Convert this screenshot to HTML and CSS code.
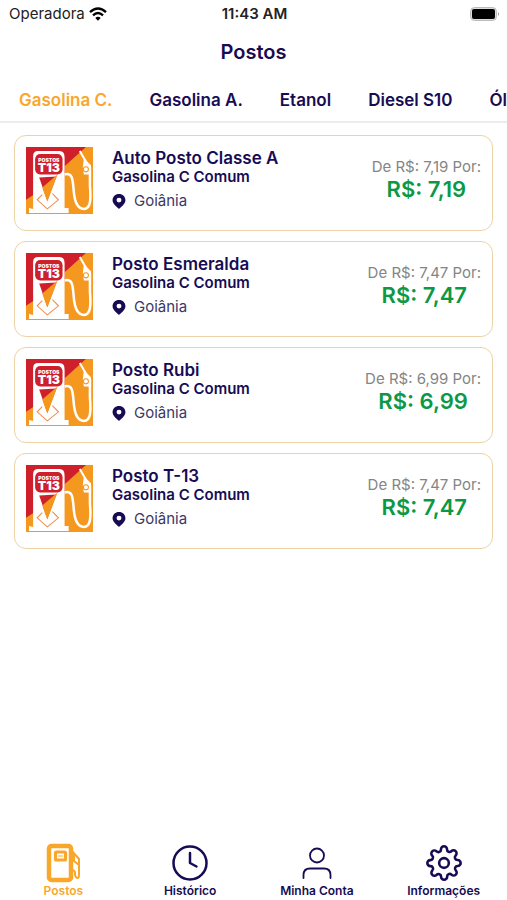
FILE: index.html
```html
<!DOCTYPE html>
<html lang="pt-BR">
<head>
    <meta charset="UTF-8">
    <meta name="viewport" content="width=device-width, initial-scale=1.0">
    <title>Postos</title>
    <link rel="stylesheet" href="styles.css">
</head>
<body>
    <!-- Shared drawings -->
    <svg class="symbols" aria-hidden="true">
        <symbol id="station-logo" viewBox="0 0 66 66">
            <rect width="66" height="66" fill="#f5981f"/>
            <path d="M0 0H59L38 19V27L0 52Z" fill="#cf1f2b"/>
            <path d="M7 61V9Q7 4 12 4H33Q38 4 38 10V60H42V65H3V60Z" fill="#fff"/>
            <path d="M38 27C46 25 46 32 47 43C48 56 52 61 57 61C64 61 64 51 63 38V20" fill="none" stroke="#fff" stroke-width="2.500"/>
            <path d="M53 4L60 16" fill="none" stroke="#fff" stroke-width="2"/>
            <path d="M57 11L64 18V27H57L56 20Z" fill="#fff"/>
            <circle cx="59" cy="22" r="2.500" fill="none" stroke="#f5961d" stroke-width="1"/>
            <rect x="9" y="7" width="27" height="20" rx="5" fill="#cf1f2b"/>
            <path d="M13 30L30 29L21 53Z" fill="#cf1f2b"/>
            <path d="M31 27L16 40L21 54Z" fill="#f5961d"/>
            <path d="M16 47L11 52L21 61L32 52L26 46" fill="none" stroke="#ef8a4a" stroke-width="1"/>
            <text x="22.500" y="14.500" class="logo-small">POSTOS</text>
            <text x="22.500" y="25" class="logo-large">T13</text>
        </symbol>
        <symbol id="pin" viewBox="0 0 12 14">
            <path fill-rule="evenodd" d="M6 0C2.500 0 0 2.500 0 5.800C0 9.500 4.500 12.500 6 14C7.500 12.500 12 9.500 12 5.800C12 2.500 9.500 0 6 0ZM6 3.400A2.300 2.300 0 1 1 6 8A2.300 2.300 0 1 1 6 3.400Z" fill="currentColor"/>
        </symbol>
    </svg>

    <!-- Status Bar -->
    <div class="status-bar">
        <div class="carrier">
            <span>Operadora</span>
            <svg width="18" height="14" viewBox="0 0 18 14" fill="none" stroke="#000" stroke-width="2.400" aria-hidden="true">
                <path d="M1 5.200Q9 -2.400 17 5.200"/>
                <path d="M4 8.400Q9 3.800 14 8.400"/>
                <path d="M6.300 11Q9 8.400 11.700 11L9 13.800Z" fill="#000" stroke="none"/>
            </svg>
        </div>
        <span class="clock">11:43 AM</span>
        <svg class="battery" width="30" height="14" viewBox="0 0 30 14" aria-hidden="true">
            <rect x="0.500" y="0.500" width="26" height="13" rx="4" fill="#ddd" stroke="#bbb"/>
            <rect x="2" y="2" width="23" height="10" rx="2" fill="#000"/>
            <path d="M28 5Q30 7 28 9Z" fill="#999"/>
        </svg>
    </div>

    <header class="title-bar">
        <h1>Postos</h1>
    </header>

    <!-- Fuel Tabs -->
    <nav class="fuel-tabs">
        <button type="button" class="active">Gasolina C.</button>
        <button type="button">Gasolina A.</button>
        <button type="button">Etanol</button>
        <button type="button">Diesel S10</button>
        <button type="button">Óleo Diesel</button>
    </nav>

    <!-- Station List -->
    <main class="stations">
        <article class="card">
            <svg class="logo" role="img" aria-label="Postos T13"><use href="#station-logo"/></svg>
            <div class="info">
                <h2>Auto Posto Classe A</h2>
                <p class="fuel">Gasolina C Comum</p>
                <p class="city"><svg class="pin" aria-hidden="true"><use href="#pin"/></svg>Goiânia</p>
            </div>
            <div class="price">
                <p class="old-price">De R$: 7,19 Por:</p>
                <p class="new-price">R$: 7,19</p>
            </div>
        </article>
        <article class="card">
            <svg class="logo" role="img" aria-label="Postos T13"><use href="#station-logo"/></svg>
            <div class="info">
                <h2>Posto Esmeralda</h2>
                <p class="fuel">Gasolina C Comum</p>
                <p class="city"><svg class="pin" aria-hidden="true"><use href="#pin"/></svg>Goiânia</p>
            </div>
            <div class="price">
                <p class="old-price">De R$: 7,47 Por:</p>
                <p class="new-price">R$: 7,47</p>
            </div>
        </article>
        <article class="card">
            <svg class="logo" role="img" aria-label="Postos T13"><use href="#station-logo"/></svg>
            <div class="info">
                <h2>Posto Rubi</h2>
                <p class="fuel">Gasolina C Comum</p>
                <p class="city"><svg class="pin" aria-hidden="true"><use href="#pin"/></svg>Goiânia</p>
            </div>
            <div class="price">
                <p class="old-price">De R$: 6,99 Por:</p>
                <p class="new-price">R$: 6,99</p>
            </div>
        </article>
        <article class="card">
            <svg class="logo" role="img" aria-label="Postos T13"><use href="#station-logo"/></svg>
            <div class="info">
                <h2>Posto T-13</h2>
                <p class="fuel">Gasolina C Comum</p>
                <p class="city"><svg class="pin" aria-hidden="true"><use href="#pin"/></svg>Goiânia</p>
            </div>
            <div class="price">
                <p class="old-price">De R$: 7,47 Por:</p>
                <p class="new-price">R$: 7,47</p>
            </div>
        </article>
    </main>

    <!-- Bottom Navigation -->
    <nav class="bottom-nav">
        <a href="#" class="active">
            <svg viewBox="0 0 40 40" fill="none" stroke="currentColor" aria-hidden="true">
                <rect x="6" y="3" width="22" height="34" rx="2.500" stroke-width="4.500"/>
                <rect x="12.500" y="9" width="10" height="8" rx="1" stroke-width="3.200"/>
                <path d="M15 13H20" stroke-width="1"/>
                <path d="M29 8L36 16V32Q36 35 34.500 35Q33 35 32 32V29Q31 27 29 27M31 11V18L36 22" stroke-width="2"/>
            </svg>
            <span>Postos</span>
        </a>
        <a href="#">
            <svg viewBox="0 0 40 40" fill="none" stroke="currentColor" stroke-width="2.500" stroke-linecap="round" stroke-linejoin="round" aria-hidden="true">
                <circle cx="20" cy="20" r="16.500"/>
                <path d="M20 10V20L26.500 23.500"/>
            </svg>
            <span>Histórico</span>
        </a>
        <a href="#">
            <svg viewBox="0 0 40 40" fill="none" stroke="currentColor" stroke-width="1.800" stroke-linecap="round" aria-hidden="true">
                <circle cx="20" cy="12.500" r="7"/>
                <path d="M6.500 35V32Q6.500 25.500 13 25.500H27Q33.500 25.500 33.500 32V35"/>
            </svg>
            <span>Minha Conta</span>
        </a>
        <a href="#">
            <svg viewBox="-1.200 -1.200 26.400 26.400" fill="none" stroke="currentColor" stroke-width="1.700" stroke-linecap="round" stroke-linejoin="round" aria-hidden="true">
                <circle cx="12" cy="12" r="3.200"/>
                <path d="M19.400 15a1.650 1.650 0 0 0 .33 1.820l.06.06a2 2 0 0 1-2.830 2.830l-.06-.06a1.650 1.650 0 0 0-1.820-.33 1.650 1.650 0 0 0-1 1.510V21a2 2 0 0 1-4 0v-.09A1.650 1.650 0 0 0 9 19.400a1.650 1.650 0 0 0-1.820.33l-.06.06a2 2 0 0 1-2.830-2.830l.06-.06a1.650 1.650 0 0 0 .33-1.820 1.650 1.650 0 0 0-1.510-1H3a2 2 0 0 1 0-4h.09A1.650 1.650 0 0 0 4.600 9a1.650 1.650 0 0 0-.33-1.820l-.06-.06a2 2 0 0 1 2.830-2.830l.06.06a1.650 1.650 0 0 0 1.820.33H9a1.650 1.650 0 0 0 1-1.510V3a2 2 0 0 1 4 0v.09a1.650 1.650 0 0 0 1 1.510 1.650 1.650 0 0 0 1.820-.33l.06-.06a2 2 0 0 1 2.830 2.830l-.06.06a1.650 1.650 0 0 0-.33 1.820V9a1.650 1.650 0 0 0 1.510 1H21a2 2 0 0 1 0 4h-.09a1.650 1.650 0 0 0-1.510 1z"/>
            </svg>
            <span>Informações</span>
        </a>
    </nav>
</body>
</html>
```

FILE: styles.css
```css
/* General Styling */
* {
    box-sizing: border-box;
}

body {
    margin: 0;
    min-height: 100vh;
    display: flex;
    flex-direction: column;
    font-family: Inter, sans-serif;
    color: #170c54;
    background: #fff;
}

h1, h2, p {
    margin: 0;
}

.symbols {
    display: none;
}

/* Status Bar */
.status-bar {
    display: grid;
    grid-template-columns: 1fr auto 1fr;
    align-items: center;
    height: 27px;
    padding: 0 7px 0 9px;
    font-size: 15px;
    color: #222;
}

.carrier {
    display: flex;
    align-items: center;
    gap: 4px;
}

.clock {
    font-weight: 600;
}

.battery {
    justify-self: end;
}

/* Title */
.title-bar {
    height: 50px;
    display: flex;
    align-items: center;
    justify-content: center;
}

.title-bar h1 {
    font-size: 20px;
    font-weight: 600;
}

/* Fuel Tabs */
.fuel-tabs {
    display: flex;
    gap: 37px;
    height: 46px;
    padding: 1px 19px 0;
    overflow: hidden;
    border-bottom: 2px solid #ececec;
}

.fuel-tabs button {
    flex: none;
    padding: 0;
    border: none;
    background: none;
    color: inherit;
    font-family: inherit;
    font-size: 17px;
    font-weight: 600;
    white-space: nowrap;
    cursor: pointer;
}

.fuel-tabs .active,
.bottom-nav .active {
    color: #f9a72b;
}

/* Station Cards */
.stations {
    flex: 1;
    display: flex;
    flex-direction: column;
    gap: 10px;
    padding: 12px 14px;
}

.card {
    display: flex;
    align-items: flex-start;
    min-height: 96px;
    padding: 11px;
    border: 1px solid #ecd2a4;
    border-radius: 12px;
}

.logo {
    flex: none;
    width: 67px;
    height: 67px;
}

.logo-small,
.logo-large {
    fill: #fff;
    font-family: Inter, sans-serif;
    font-weight: 900;
    text-anchor: middle;
}

.logo-small {
    font-size: 5px;
}

.logo-large {
    font-size: 12px;
}

.info {
    flex: 1;
    padding: 1px 0 0 19px;
}

.info h2 {
    font-size: 17px;
    line-height: 20px;
    font-weight: 600;
}

.fuel {
    font-size: 15px;
    line-height: 18px;
    font-weight: 600;
}

.city {
    display: flex;
    align-items: center;
    gap: 8px;
    padding-top: 5px;
    font-size: 15px;
    line-height: 20px;
    color: #3d3768;
}

.pin {
    width: 14px;
    height: 15px;
    color: #170c54;
}

.price {
    padding-top: 10px;
    text-align: center;
}

.old-price {
    font-size: 15px;
    line-height: 20px;
    color: #858585;
}

.new-price {
    font-size: 22px;
    line-height: 24px;
    font-weight: 600;
    color: #0d9845;
}

/* Bottom Navigation */
.bottom-nav {
    display: grid;
    grid-template-columns: repeat(4, 1fr);
    padding-bottom: 1px;
}

.bottom-nav a {
    display: flex;
    flex-direction: column;
    align-items: center;
    color: inherit;
    font-size: 12px;
    line-height: 16px;
    font-weight: 600;
    text-decoration: none;
}

.bottom-nav svg {
    width: 40px;
    height: 40px;
}
```
